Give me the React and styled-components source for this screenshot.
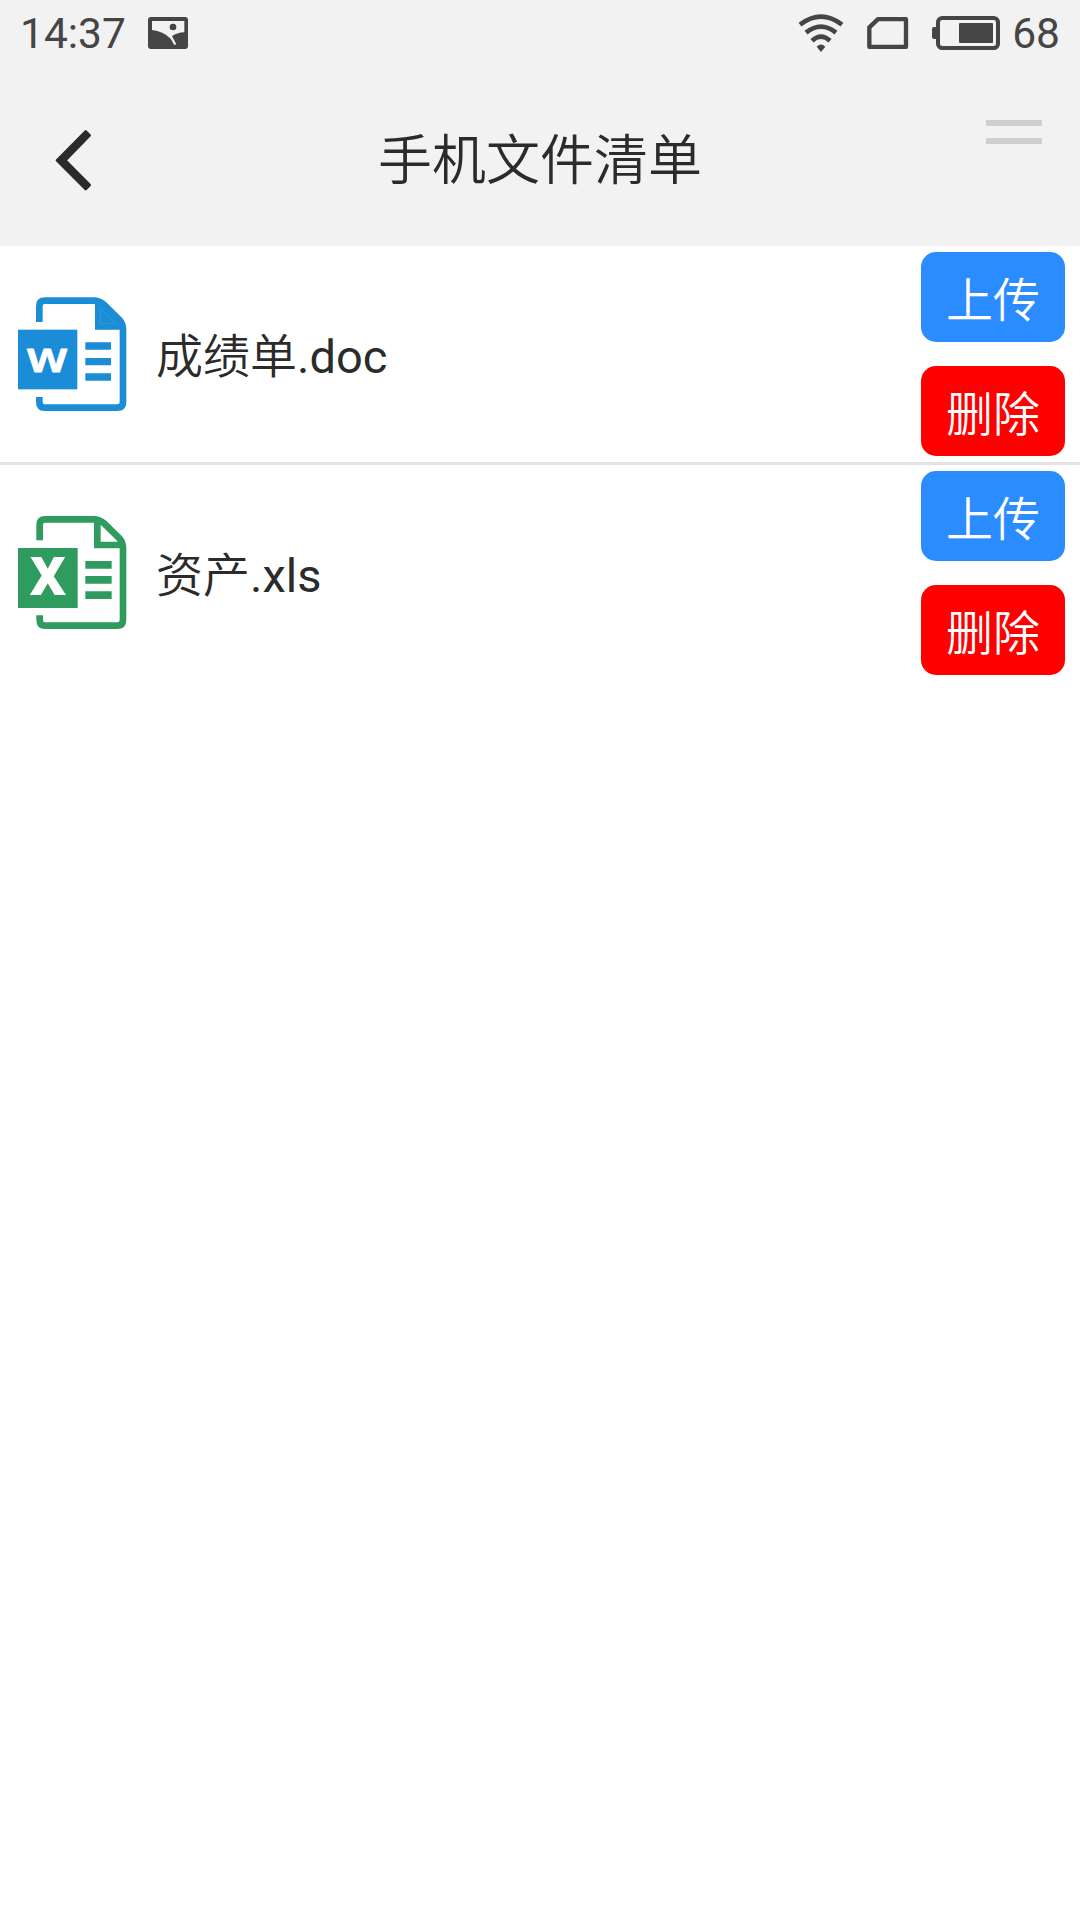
import React, { useState } from "react";
import styled, { createGlobalStyle } from "styled-components";

const GlobalStyle = createGlobalStyle`
  * {
    box-sizing: border-box;
  }
  body {
    margin: 0;
    background-color: #fff;
    font-family: Roboto, "Noto Sans CJK SC DemiLight", "Noto Sans CJK SC", sans-serif;
    color: #2b2b2b;
  }
`;

const Page = styled.div`
  width: 100%;
  min-height: 1920px;
  background-color: #fff;
`;

const Top = styled.div`
  height: 246px;
  background-color: #f2f2f2;
`;

const StatusBar = styled.div`
  height: 66px;
  padding: 0 20px;
  display: flex;
  justify-content: space-between;
  align-items: center;
  font-size: 42.5px;
  line-height: 68px;
  color: #454545;

  svg {
    display: block;
  }
`;

const StatusGroup = styled.div`
  display: flex;
  align-items: center;
  gap: ${(props) => props.$gap}px;
`;

const StatusText = styled.span`
  padding-top: 2px;
`;

const NavBar = styled.div`
  height: 180px;
  display: grid;
  grid-template-columns: 200px 1fr 200px;
`;

const BackButton = styled.button`
  border: none;
  background: none;
  padding: 63px 0 0 55px;
  display: flex;
  align-items: flex-start;
  cursor: pointer;
`;

const Title = styled.h1`
  margin: 0;
  text-align: center;
  font-family: "Noto Sans CJK SC", sans-serif;
  font-size: 54px;
  font-weight: 350;
  line-height: 182px;
  height: 180px;
`;

const MenuButton = styled.button`
  border: none;
  background: none;
  padding: 54px 38px 0 0;
  display: flex;
  flex-direction: column;
  align-items: flex-end;
  gap: 12px;
  cursor: pointer;
`;

const MenuLine = styled.span`
  width: 56px;
  height: 6px;
  background-color: #d0d1cc;
`;

const FileList = styled.ul`
  margin: 0;
  padding: 0;
  list-style: none;
`;

const FileRow = styled.li`
  display: flex;
  align-items: center;
  padding: 6px 15px 6px 12px;

  & + & {
    border-top: 3px solid #e3e3e5;
  }
`;

const FileIcon = styled.svg`
  width: 120px;
  height: 120px;
  flex: none;
`;

const FileName = styled.div`
  flex: 1;
  padding: 5px 0 0 24px;
  font-size: 47px;
  line-height: 60px;
`;

const Actions = styled.div`
  display: flex;
  flex-direction: column;
  gap: 24px;
`;

const ActionButton = styled.button`
  width: 144px;
  height: 90px;
  padding: 0;
  border: none;
  border-radius: 15px;
  background-color: ${(props) => props.$color};
  color: #fff;
  font-family: "Noto Sans CJK SC", sans-serif;
  font-size: 47px;
  font-weight: 350;
  line-height: 88px;
  cursor: pointer;
`;

const PictureIcon = () => (
  <svg width="40" height="32" viewBox="0 0 120 96">
    <rect width="120" height="96" rx="9" fill="#454545" />
    <path
      d="M12 12H109V46Q86 47 72 58L85 82L79 84L68 65Q45 42 12 39Z"
      fill="#f2f2f2"
    />
    <circle cx="75" cy="30" r="10" fill="#454545" />
  </svg>
);

const WifiIcon = () => (
  <svg width="46" height="40" viewBox="54 38 138 120">
    <g fill="none" stroke="#454545" strokeWidth="14">
      <path d="M60 73Q123 25 186 73" />
      <path d="M78 97Q123 61 168 97" />
      <path d="M96 121Q123 97 150 121" />
    </g>
    <path d="M110 139Q123 126 136 139L123 155Z" fill="#454545" />
  </svg>
);

const SimIcon = () => (
  <svg width="42" height="32" viewBox="0 0 126 96">
    <path
      d="M33 6.500H117V89.500H7V31Z"
      fill="none"
      stroke="#454545"
      strokeWidth="13"
      strokeLinejoin="round"
    />
  </svg>
);

const BatteryIcon = () => (
  <svg width="68" height="34" viewBox="0 0 204 102">
    <path d="M14 33H6Q0 33 0 39V63Q0 69 6 69H14Z" fill="#454545" />
    <rect
      x="18"
      y="6"
      width="180"
      height="90"
      rx="13"
      fill="none"
      stroke="#454545"
      strokeWidth="12"
    />
    <rect x="81" y="21" width="102" height="60" rx="3" fill="#454545" />
  </svg>
);

const BackIcon = () => (
  <svg width="37" height="62" viewBox="165 87 111 186">
    <path
      d="M171 181L257 94L269 106L196 181L269 255L257 267Z"
      fill="#2b2b2b"
      stroke="#2b2b2b"
      strokeWidth="8"
      strokeLinejoin="round"
    />
  </svg>
);

const WordIcon = () => (
  <FileIcon viewBox="36 42 360 360">
    <path
      d="M118 126V78Q118 62 134 62H282Q298 62 312 74L358 119Q369 132 369 148V366Q369 383 352 383H134Q118 383 118 366V351"
      fill="none"
      stroke="#1b8dd7"
      strokeWidth="20"
    />
    <path d="M285 58L310 62L368 118L374 149H285Z" fill="#1b8dd7" />
    <path
      d="M302 88V131H346Z"
      fill="none"
      stroke="#3c9fe0"
      strokeWidth="2"
    />
    <rect x="54" y="149" width="178" height="179" fill="#1b8dd7" />
    <text
      x="80"
      y="276"
      fontFamily="Open Sans, sans-serif"
      fontWeight="600"
      fontSize="127"
      textLength="122"
      lengthAdjust="spacingAndGlyphs"
      fill="#fff"
      stroke="#fff"
      strokeWidth="3"
      strokeLinejoin="round"
    >
      w
    </text>
    <path
      d="M256 187H333V209H256ZM256 234H333V256H256ZM256 280H333V302H256Z"
      fill="#1b8dd7"
    />
  </FileIcon>
);

const ExcelIcon = () => (
  <FileIcon viewBox="36 39 360 360">
    <g fill="none" stroke="#2f9b5f" strokeWidth="20">
      <path d="M119 121V74Q119 58 135 58H282Q298 58 312 70L358 115Q369 127 369 143V360Q369 377 352 377H135Q119 377 119 360V346" />
      <path d="M292 60V135H365" />
    </g>
    <rect x="54" y="144" width="179" height="180" fill="#2f9b5f" />
    <text
      x="89"
      y="285"
      fontFamily="Open Sans, sans-serif"
      fontWeight="800"
      fontSize="157"
      textLength="109"
      lengthAdjust="spacingAndGlyphs"
      fill="#fff"
    >
      X
    </text>
    <path
      d="M256 183H335V206H256ZM256 228H335V251H256ZM256 274H335V297H256Z"
      fill="#2f9b5f"
    />
  </FileIcon>
);

export default function App() {
  const [files, setFiles] = useState([
    { name: "成绩单.doc", icon: WordIcon },
    { name: "资产.xls", icon: ExcelIcon },
  ]);

  const removeFile = (name) => {
    setFiles(files.filter((file) => file.name !== name));
  };

  return (
    <Page>
      <GlobalStyle />
      <Top>
        <StatusBar>
          <StatusGroup $gap={22}>
            <StatusText>14:37</StatusText>
            <PictureIcon />
          </StatusGroup>
          <StatusGroup $gap={23}>
            <WifiIcon />
            <SimIcon />
            <StatusGroup $gap={12}>
              <BatteryIcon />
              <StatusText>68</StatusText>
            </StatusGroup>
          </StatusGroup>
        </StatusBar>
        <NavBar>
          <BackButton>
            <BackIcon />
          </BackButton>
          <Title>手机文件清单</Title>
          <MenuButton>
            <MenuLine />
            <MenuLine />
          </MenuButton>
        </NavBar>
      </Top>
      <FileList>
        {files.map(({ name, icon: Icon }) => (
          <FileRow key={name}>
            <Icon />
            <FileName>{name}</FileName>
            <Actions>
              <ActionButton $color="#2b8cff">上传</ActionButton>
              <ActionButton $color="#ff0000" onClick={() => removeFile(name)}>
                删除
              </ActionButton>
            </Actions>
          </FileRow>
        ))}
      </FileList>
    </Page>
  );
}
